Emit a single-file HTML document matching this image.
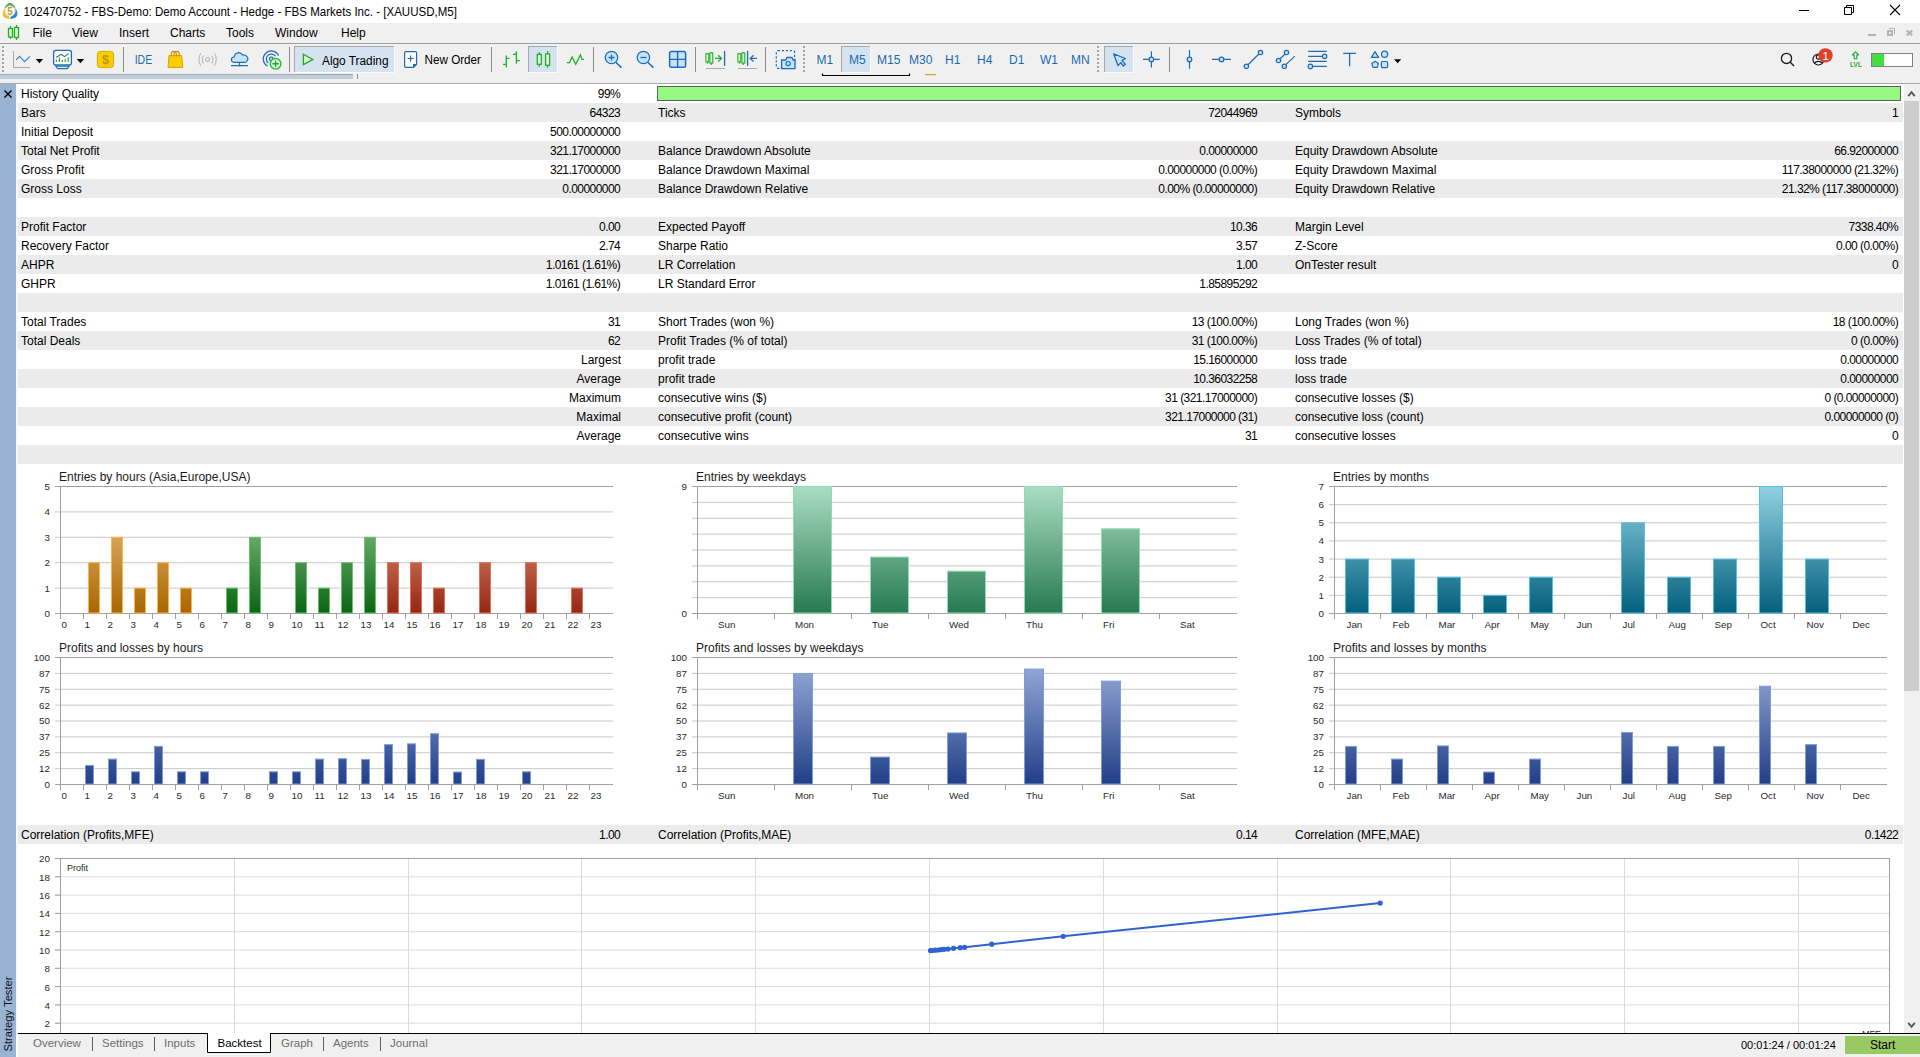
<!DOCTYPE html>
<html><head><meta charset="utf-8"><style>
html,body{margin:0;padding:0;background:#fff;overflow:hidden}
svg{display:block;font-family:"Liberation Sans", sans-serif}
</style></head><body>
<svg width="1920" height="1057" viewBox="0 0 1920 1057">
<rect x="0" y="0" width="1920" height="23" fill="#ffffff" /><rect x="0" y="23" width="1920" height="61" fill="#f0f0f0" /><rect x="0" y="43" width="1920" height="1" fill="#a0a0a0"/><rect x="0" y="83" width="1920" height="1" fill="#a9a9a9"/><text x="23.5" y="16" font-size="12.2" fill="#000" text-anchor="start" textLength="433.5" lengthAdjust="spacingAndGlyphs">102470752 - FBS-Demo: Demo Account - Hedge - FBS Markets Inc. - [XAUUSD,M5]</text><text x="32.5" y="37" font-size="12" fill="#000" text-anchor="start" >File</text><text x="72" y="37" font-size="12" fill="#000" text-anchor="start" >View</text><text x="119" y="37" font-size="12" fill="#000" text-anchor="start" >Insert</text><text x="170" y="37" font-size="12" fill="#000" text-anchor="start" >Charts</text><text x="226" y="37" font-size="12" fill="#000" text-anchor="start" >Tools</text><text x="275" y="37" font-size="12" fill="#000" text-anchor="start" >Window</text><text x="341" y="37" font-size="12" fill="#000" text-anchor="start" >Help</text><path d="M10 3 L4 8 L2.5 15 L6 18.5 L10 19 L14 18.5 L17.5 15 L16 8 Z" stroke="none" fill="#ffffff" stroke-width="1.2" /><path d="M10 2.8 C7 3.5 5 6 4.5 8.5 L10 8 L15.5 8.5 C15 6 13 3.5 10 2.8 Z" stroke="none" fill="#5aa84a" stroke-width="1.2" /><path d="M4.5 8.5 C2.5 11 2 14 3 16 C5 18.5 8 19.2 10 19 L8 14 Z" stroke="none" fill="#e8c820" stroke-width="1.2" /><path d="M15.5 8.5 C17.5 11 18 14 17 16 C15 18.5 12 19.2 10 19 L12 14 Z" stroke="none" fill="#2a8ad0" stroke-width="1.2" /><circle cx="10" cy="11" r="5.2" stroke="#d0d0d0" fill="#ffffff" stroke-width="0.8"/><text x="10" y="14.6" font-size="10" font-weight="bold" fill="#d09a2a" text-anchor="middle">5</text><rect x="1799" y="10" width="10" height="1" fill="#000"/><path d="M1844.5 7.5 H1851.5 V14.5 H1844.5 Z M1846.5 7.5 V5.5 H1853.5 V12.5 H1851.5" fill="none" stroke="#000" stroke-width="1"/><path d="M1890 5 L1900 15 M1900 5 L1890 15" stroke="#000" stroke-width="1.1"/><rect x="1868" y="34" width="8" height="2" fill="#b4b4b4" /><rect x="1887" y="30" width="6" height="6" fill="#b4b4b4" /><rect x="1889" y="32" width="2" height="2" fill="#f0f0f0" /><rect x="1889" y="28" width="6" height="1" fill="#b4b4b4" /><rect x="1894" y="28" width="1" height="6" fill="#b4b4b4" /><path d="M1906.8 30.6 L1912.2 35.4 M1912.2 30.6 L1906.8 35.4" stroke="#b4b4b4" stroke-width="2.1"/><path d="M10.5 26 V39 M16.5 25 V40" stroke="#1eb020" fill="none" stroke-width="1.2" /><rect x="8.5" y="28.5" width="4" height="8.5" fill="#e6fae6" stroke="#1eb020" stroke-width="1.3"/><rect x="14.5" y="27.5" width="4" height="10" fill="#e6fae6" stroke="#1eb020" stroke-width="1.3"/><rect x="2" y="46" width="2" height="2" fill="#a4a4a4" /><rect x="4" y="48" width="1" height="1" fill="#fafafa" /><rect x="2" y="50" width="2" height="2" fill="#a4a4a4" /><rect x="4" y="52" width="1" height="1" fill="#fafafa" /><rect x="2" y="54" width="2" height="2" fill="#a4a4a4" /><rect x="4" y="56" width="1" height="1" fill="#fafafa" /><rect x="2" y="58" width="2" height="2" fill="#a4a4a4" /><rect x="4" y="60" width="1" height="1" fill="#fafafa" /><rect x="2" y="62" width="2" height="2" fill="#a4a4a4" /><rect x="4" y="64" width="1" height="1" fill="#fafafa" /><rect x="2" y="66" width="2" height="2" fill="#a4a4a4" /><rect x="4" y="68" width="1" height="1" fill="#fafafa" /><rect x="2" y="70" width="2" height="2" fill="#a4a4a4" /><rect x="4" y="72" width="1" height="1" fill="#fafafa" /><rect x="803" y="46" width="2" height="2" fill="#a4a4a4" /><rect x="805" y="48" width="1" height="1" fill="#fafafa" /><rect x="803" y="50" width="2" height="2" fill="#a4a4a4" /><rect x="805" y="52" width="1" height="1" fill="#fafafa" /><rect x="803" y="54" width="2" height="2" fill="#a4a4a4" /><rect x="805" y="56" width="1" height="1" fill="#fafafa" /><rect x="803" y="58" width="2" height="2" fill="#a4a4a4" /><rect x="805" y="60" width="1" height="1" fill="#fafafa" /><rect x="803" y="62" width="2" height="2" fill="#a4a4a4" /><rect x="805" y="64" width="1" height="1" fill="#fafafa" /><rect x="803" y="66" width="2" height="2" fill="#a4a4a4" /><rect x="805" y="68" width="1" height="1" fill="#fafafa" /><rect x="803" y="70" width="2" height="2" fill="#a4a4a4" /><rect x="805" y="72" width="1" height="1" fill="#fafafa" /><rect x="1097" y="46" width="2" height="2" fill="#a4a4a4" /><rect x="1099" y="48" width="1" height="1" fill="#fafafa" /><rect x="1097" y="50" width="2" height="2" fill="#a4a4a4" /><rect x="1099" y="52" width="1" height="1" fill="#fafafa" /><rect x="1097" y="54" width="2" height="2" fill="#a4a4a4" /><rect x="1099" y="56" width="1" height="1" fill="#fafafa" /><rect x="1097" y="58" width="2" height="2" fill="#a4a4a4" /><rect x="1099" y="60" width="1" height="1" fill="#fafafa" /><rect x="1097" y="62" width="2" height="2" fill="#a4a4a4" /><rect x="1099" y="64" width="1" height="1" fill="#fafafa" /><rect x="1097" y="66" width="2" height="2" fill="#a4a4a4" /><rect x="1099" y="68" width="1" height="1" fill="#fafafa" /><rect x="1097" y="70" width="2" height="2" fill="#a4a4a4" /><rect x="1099" y="72" width="1" height="1" fill="#fafafa" /><path d="M13.5 51 V67.5 H30" stroke="#a8a8a8" fill="none" stroke-width="1" /><path d="M16.2 59.8 L19.6 56.3 L24.6 61.6 L29.9 56.3" stroke="#3d85c6" fill="none" stroke-width="1.2" /><path d="M35.8 59 H43.1 L39.45 63.2 Z" stroke="none" fill="#000" stroke-width="1.2" /><rect x="53.6" y="50.4" width="17.8" height="14.6" rx="2.2" fill="#fff" stroke="#1f6cb5" stroke-width="1.3"/><path d="M55 66.3 H70 M56.3 66.3 Q56.8 68.6 58.6 68.6 H66.4 Q68.2 68.6 68.7 66.3" stroke="#1f6cb5" fill="none" stroke-width="1.1" /><path d="M56.1 57.5 L61.1 54.4 L64.6 56.6 L68.6 53.4" stroke="#1f6cb5" fill="none" stroke-width="1.1" /><rect x="55.699999999999996" y="59.6" width="1.2" height="2.3999999999999986" fill="#1eb020" /><rect x="58.8" y="57.4" width="1.2" height="4.600000000000001" fill="#1eb020" /><rect x="61.699999999999996" y="60" width="1.2" height="2" fill="#1eb020" /><rect x="64.60000000000001" y="58.8" width="1.2" height="3.200000000000003" fill="#1eb020" /><rect x="67.60000000000001" y="57.2" width="1.2" height="4.799999999999997" fill="#1eb020" /><path d="M76.8 59 H84.1 L80.45 63.2 Z" stroke="none" fill="#000" stroke-width="1.2" /><rect x="97.4" y="51.4" width="16.2" height="16.2" rx="3" fill="#f8d000" stroke="#dca400" stroke-width="1"/><text x="105.5" y="64" font-size="13" font-weight="bold" fill="#c89212" text-anchor="middle">$</text><rect x="123" y="47" width="1" height="25" fill="#8c8c8c"/><text x="134.7" y="64" font-size="12.5" fill="#1f6cb5" textLength="17.5" lengthAdjust="spacingAndGlyphs">IDE</text><path d="M169 55.5 H181.7 L182.8 67.5 H168 Z" stroke="#e0a200" fill="#f8d000" stroke-width="1" /><path d="M171.3 56.5 V54 C171.3 50.5 176.3 50.5 176.3 54 V56.5 M174 56.5 V54 C174 50.5 179.3 50.5 179.3 54 V56.5" stroke="#d09000" fill="none" stroke-width="1.1" /><circle cx="207.6" cy="59.4" r="1.9" stroke="#b8b8b8" fill="none" stroke-width="1.2"/><path d="M203.5 55.5 C202 57.5 202 61.3 203.5 63.3 M211.7 55.5 C213.2 57.5 213.2 61.3 211.7 63.3 M200.8 53.2 C198.4 56.5 198.4 62.3 200.8 65.6 M214.4 53.2 C216.8 56.5 216.8 62.3 214.4 65.6" stroke="#b8b8b8" fill="none" stroke-width="1.1" /><path d="M234 62.3 C230.5 62.3 230.5 57 234.2 57 C234.5 52.5 240.5 51 242.5 55 C246.5 54.5 249 58 247.3 60.5 C247 62 246 62.3 245 62.3 Z" stroke="#1f6cb5" fill="#c5e3fb" stroke-width="1.2" /><path d="M239.5 62.5 V65.5 M231 65.6 H248" stroke="#1f6cb5" fill="none" stroke-width="1.2" /><circle cx="239.5" cy="65.6" r="1" stroke="none" fill="#1f6cb5" stroke-width="1.2"/><path d="M278.55 55.62 A8.0 8.0 0 1 0 267.54 66.06 M275.40 56.13 A5.0 5.0 0 1 0 268.22 62.94" stroke="#1f6cb5" fill="none" stroke-width="1.25" /><circle cx="271.3" cy="59" r="1.9" stroke="#1f6cb5" fill="#c5e3fb" stroke-width="1.2"/><circle cx="275.6" cy="63.8" r="5.3" stroke="#22bb33" fill="#e2fbe2" stroke-width="1.4"/><path d="M275.6 60.5 V67.1 M272.3 63.8 H278.9" stroke="#1aaa2a" fill="none" stroke-width="1.5" /><rect x="289" y="47" width="1" height="25" fill="#8c8c8c"/><rect x="294" y="46" width="100" height="26" fill="#d5e3f1" /><rect x="294" y="46" width="100" height="1" fill="#a8a8a8"/><rect x="294" y="46" width="1" height="26" fill="#a8a8a8"/><rect x="294" y="72" width="101" height="1" fill="#fafafa"/><rect x="394" y="46" width="1" height="27" fill="#fafafa"/><path d="M303.4 54.3 V64.6 L312.8 59.45 Z" stroke="#22aa22" fill="#d4f7d4" stroke-width="1.3" /><text x="322" y="65" font-size="12" fill="#000" text-anchor="start" textLength="66.5" lengthAdjust="spacingAndGlyphs">Algo Trading</text><path d="M405.8 51.6 H415.5 Q416.6 51.6 416.6 52.7 V64.5 L413.5 67.4 H405.8 Q404.6 67.4 404.6 66.2 V52.8 Q404.6 51.6 405.8 51.6 Z" stroke="#1f6cb5" fill="#fff" stroke-width="1.2" /><path d="M416.8 64 L413 67.8 V64 Z" stroke="none" fill="#1f6cb5" stroke-width="1.2" /><path d="M410.6 55.5 V61.5 M407.6 58.5 H413.6" stroke="#1f6cb5" fill="none" stroke-width="1.2" /><text x="424.5" y="64" font-size="12" fill="#000" text-anchor="start" textLength="56.5" lengthAdjust="spacingAndGlyphs">New Order</text><rect x="491" y="47" width="1" height="25" fill="#8c8c8c"/><path d="M506.3 55.4 V67.4 M503 64.3 H506.3 M506.3 58.3 H509.6 M516.4 51.2 V63.8 M513 54.4 H516.4 M516.4 60.6 H519.8" stroke="#1eb020" fill="none" stroke-width="1.3" /><rect x="528" y="46" width="29" height="26" fill="#d5e3f1" /><rect x="528" y="46" width="29" height="1" fill="#a8a8a8"/><rect x="528" y="46" width="1" height="26" fill="#a8a8a8"/><rect x="528" y="72" width="30" height="1" fill="#fafafa"/><rect x="557" y="46" width="1" height="27" fill="#fafafa"/><path d="M539.3 52 V66.7 M547.6 51 V67.7" stroke="#1eb020" fill="none" stroke-width="1.2" /><rect x="537.3" y="54.4" width="4" height="9.9" fill="#e6fae6" stroke="#1eb020" stroke-width="1.3"/><rect x="545.6" y="53.9" width="4" height="11.4" fill="#e6fae6" stroke="#1eb020" stroke-width="1.3"/><path d="M566.9 62.7 H569.5 L572.1 57 L575.7 64.3 L580.4 54.9 L582 59.4 H584" stroke="#1eb020" fill="none" stroke-width="1.3" /><rect x="593" y="47" width="1" height="25" fill="#8c8c8c"/><path d="M615.8 62.2 L621.5 67.6" stroke="#1f6cb5" fill="none" stroke-width="1.5" /><circle cx="611.5" cy="57.5" r="6.2" stroke="#1f6cb5" fill="#c5e3fb" stroke-width="1.3"/><path d="M608.5 57.5 H614.5 M611.5 54.5 V60.5" stroke="#1f6cb5" fill="none" stroke-width="1.3" /><path d="M647.6999999999999 62.2 L653.4 67.6" stroke="#1f6cb5" fill="none" stroke-width="1.5" /><circle cx="643.4" cy="57.5" r="6.2" stroke="#1f6cb5" fill="#c5e3fb" stroke-width="1.3"/><path d="M640.4 57.5 H646.4" stroke="#1f6cb5" fill="none" stroke-width="1.3" /><rect x="669.6" y="51.6" width="16" height="15.6" rx="2" fill="#c5e3fb" stroke="#1f6cb5" stroke-width="1.5"/><path d="M677.6 51.6 V67.2 M669.6 59.4 H685.6" stroke="#1f6cb5" fill="none" stroke-width="1.4" /><rect x="695" y="47" width="1" height="25" fill="#8c8c8c"/><path d="M707.4 53 V63.8 M711.3 51.9 V65" stroke="#1eb020" fill="none" stroke-width="1.1" /><rect x="705.9" y="53.9" width="2.9" height="8" fill="#e6fae6" stroke="#1eb020" stroke-width="1.1"/><rect x="709.9" y="52.9" width="2.9" height="10.2" fill="#e6fae6" stroke="#1eb020" stroke-width="1.1"/><path d="M715 58.4 H721.6 M718.2 55.2 L721.6 58.4 L718.2 61.6" stroke="#1eb020" fill="none" stroke-width="1.3" /><path d="M724.6 50.9 V65.9" stroke="#1f6cb5" fill="none" stroke-width="1.3" /><rect x="706" y="68" width="19" height="1" fill="#a8a8a8" /><path d="M739.4 53 V63.8 M743.3 51.9 V65" stroke="#1eb020" fill="none" stroke-width="1.1" /><rect x="737.9" y="53.9" width="2.9" height="8" fill="#e6fae6" stroke="#1eb020" stroke-width="1.1"/><rect x="741.9" y="52.9" width="2.9" height="10.2" fill="#e6fae6" stroke="#1eb020" stroke-width="1.1"/><path d="M747.6 50.9 V65.9" stroke="#1f6cb5" fill="none" stroke-width="1.3" /><path d="M757 58.4 H750.5 M753.6 55.2 L750.3 58.4 L753.6 61.6" stroke="#1f6cb5" fill="none" stroke-width="1.3" /><rect x="738" y="68" width="19" height="1" fill="#a8a8a8" /><rect x="765" y="47" width="1" height="25" fill="#8c8c8c"/><rect x="776.3" y="50.7" width="18.3" height="17.7" rx="1.5" fill="none" stroke="#1f6cb5" stroke-width="1.2" stroke-dasharray="2.2 1.8"/><path d="M782 60 H785.8 L787 57.5 H792 L793.2 60 H795 V68.6 H781.6 V60 Z" stroke="#1f6cb5" fill="#c5e3fb" stroke-width="1.3" /><circle cx="788.2" cy="63.6" r="2.1" stroke="#1f6cb5" fill="none" stroke-width="1.2"/><text x="816.4" y="64" font-size="12" fill="#1a6ab0" text-anchor="start" >M1</text><rect x="841" y="46" width="29" height="26" fill="#d5e3f1" /><rect x="841" y="46" width="29" height="1" fill="#a8a8a8"/><rect x="841" y="46" width="1" height="26" fill="#a8a8a8"/><rect x="841" y="72" width="30" height="1" fill="#fafafa"/><rect x="870" y="46" width="1" height="27" fill="#fafafa"/><text x="849" y="64" font-size="12" fill="#1a6ab0" text-anchor="start" >M5</text><text x="877" y="64" font-size="12" fill="#1a6ab0" text-anchor="start" >M15</text><text x="909" y="64" font-size="12" fill="#1a6ab0" text-anchor="start" >M30</text><text x="945" y="64" font-size="12" fill="#1a6ab0" text-anchor="start" >H1</text><text x="977" y="64" font-size="12" fill="#1a6ab0" text-anchor="start" >H4</text><text x="1009" y="64" font-size="12" fill="#1a6ab0" text-anchor="start" >D1</text><text x="1040" y="64" font-size="12" fill="#1a6ab0" text-anchor="start" >W1</text><text x="1071" y="64" font-size="12" fill="#1a6ab0" text-anchor="start" >MN</text><path d="M822.5 73.5 V75.5 H909.5 V73.5" fill="none" stroke="#000" stroke-width="1.2"/><rect x="925" y="74" width="11" height="1.2" fill="#d8a030" /><rect x="1104" y="46" width="29" height="26" fill="#d5e3f1" /><rect x="1104" y="46" width="29" height="1" fill="#a8a8a8"/><rect x="1104" y="46" width="1" height="26" fill="#a8a8a8"/><rect x="1104" y="72" width="30" height="1" fill="#fafafa"/><rect x="1133" y="46" width="1" height="27" fill="#fafafa"/><path d="M1113.6 53.8 L1125.4 58.5 L1122 60.6 L1125.4 64.2 L1123.3 66 L1120.8 62.6 L1118 65.6 Z" stroke="#1f6cb5" fill="#c5e3fb" stroke-width="1.3" stroke-linejoin="round"/><path d="M1143 59.4 H1149 M1153.8 59.4 H1159.8 M1151.4 51.2 V57 M1151.4 61.8 V67.6" stroke="#1f6cb5" fill="none" stroke-width="1.2" /><circle cx="1151.4" cy="59.4" r="2.3" stroke="#1f6cb5" fill="#c5e3fb" stroke-width="1.2"/><rect x="1169" y="47" width="1" height="25" fill="#8c8c8c"/><path d="M1189.5 50.1 V57 M1189.5 61.8 V68.7" stroke="#1f6cb5" fill="none" stroke-width="1.2" /><circle cx="1189.5" cy="59.4" r="2.3" stroke="#1f6cb5" fill="#c5e3fb" stroke-width="1.2"/><path d="M1212 59.4 H1219.2 M1223.8 59.4 H1230.9" stroke="#1f6cb5" fill="none" stroke-width="1.2" /><circle cx="1221.5" cy="59.4" r="2.3" stroke="#1f6cb5" fill="#c5e3fb" stroke-width="1.2"/><path d="M1248 64.7 L1258.9 54" stroke="#1f6cb5" fill="none" stroke-width="1.2" /><circle cx="1246.4" cy="66.3" r="2.2" stroke="#1f6cb5" fill="#c5e3fb" stroke-width="1.2"/><circle cx="1260.5" cy="52.5" r="2.2" stroke="#1f6cb5" fill="#c5e3fb" stroke-width="1.2"/><path d="M1280 58.8 L1285 54.2 M1285.8 64.6 L1294.9 56.1" stroke="#1f6cb5" fill="none" stroke-width="1.2" /><circle cx="1278.5" cy="60.5" r="2.2" stroke="#1f6cb5" fill="#c5e3fb" stroke-width="1.2"/><circle cx="1286.5" cy="52.5" r="2.2" stroke="#1f6cb5" fill="#c5e3fb" stroke-width="1.2"/><circle cx="1284.3" cy="66.3" r="2.2" stroke="#1f6cb5" fill="#c5e3fb" stroke-width="1.2"/><path d="M1308.2 51.4 H1326.8 M1308.2 56.3 H1322.4 M1308.2 61.4 H1326.8 M1312.6 66.4 H1326.8" stroke="#1f6cb5" fill="none" stroke-width="1.2" /><circle cx="1324.6" cy="56.3" r="2.2" stroke="#1f6cb5" fill="#c5e3fb" stroke-width="1.2"/><circle cx="1310.4" cy="66.4" r="2.2" stroke="#1f6cb5" fill="#c5e3fb" stroke-width="1.2"/><path d="M1343.2 53.4 H1356 M1349.6 53.4 V66.2" stroke="#1f6cb5" fill="none" stroke-width="1.3" /><path d="M1375 51.6 L1378.6 57.4 H1371.4 Z" stroke="#1f6cb5" fill="#c5e3fb" stroke-width="1.2" stroke-linejoin="round"/><circle cx="1384.6" cy="54.3" r="3.1" stroke="#1f6cb5" fill="#c5e3fb" stroke-width="1.2"/><path d="M1375.1 61.3 L1378.4 63.6 L1377.2 67.4 H1373 L1371.8 63.6 Z" stroke="#1f6cb5" fill="#c5e3fb" stroke-width="1.2" stroke-linejoin="round"/><rect x="1381.4" y="61.5" width="6.2" height="6.1" rx="1" fill="#c5e3fb" stroke="#1f6cb5" stroke-width="1.2"/><path d="M1394.1 59.2 H1401.2 L1397.65 63.2 Z" stroke="none" fill="#000" stroke-width="1.2" /><circle cx="1786.5" cy="58.4" r="5.1" stroke="#1a1a1a" fill="none" stroke-width="1.3"/><path d="M1790.3 62.3 L1794 66" stroke="#1a1a1a" fill="none" stroke-width="1.4" /><circle cx="1818.4" cy="59.5" r="5.5" stroke="#1a1a1a" fill="none" stroke-width="1.2"/><circle cx="1818.4" cy="57" r="2.1" stroke="#1a1a1a" fill="none" stroke-width="1.1"/><path d="M1814.3 63.2 C1815.8 60.8 1821 60.8 1822.5 63.2" stroke="#1a1a1a" fill="none" stroke-width="1.1" /><circle cx="1825.5" cy="55.4" r="7.2" stroke="none" fill="#e0402a" stroke-width="1.2"/><text x="1825.6" y="59.6" font-size="11.5" fill="#fff" text-anchor="middle">1</text><path d="M1855.5 51.8 L1858.6 55 H1856.8 V58.8 H1854.2 V55 H1852.4 Z" stroke="#1aaa2a" fill="#fff" stroke-width="1.1" stroke-linejoin="round"/><text x="1856" y="66.6" font-size="7" font-weight="bold" fill="#1aaa2a" text-anchor="middle" textLength="12" lengthAdjust="spacingAndGlyphs">LVL</text><rect x="1871.5" y="53.5" width="41" height="13" fill="#fff" stroke="#808080" stroke-width="1"/><rect x="1872" y="54" width="12" height="12" fill="#44dd44" /><rect x="0" y="74" width="353" height="1" fill="#a8a8a8" /><rect x="0" y="75" width="353" height="4" fill="#bfcedb" /><rect x="357" y="74" width="1" height="5" fill="#909090"/><rect x="0" y="84" width="16" height="973" fill="#98b3d3" /><rect x="16" y="84" width="2" height="949" fill="#f7f7f7" /><rect x="18" y="84" width="1886" height="949" fill="#ffffff" /><path d="M4.5 90.6 L11.5 97.6 M11.5 90.6 L4.5 97.6" stroke="#000" stroke-width="1.4"/><text transform="translate(12,1051.5) rotate(-90)" font-size="11.5" fill="#111" textLength="75" lengthAdjust="spacingAndGlyphs">Strategy Tester</text><text x="21" y="98" font-size="12" fill="#000" text-anchor="start" >History Quality</text><text x="620.2" y="98" font-size="12" fill="#000" text-anchor="end" letter-spacing="-0.55">99%</text><rect x="18" y="103" width="1885" height="19" fill="#ebebeb" /><text x="21" y="117" font-size="12" fill="#000" text-anchor="start" >Bars</text><text x="620.2" y="117" font-size="12" fill="#000" text-anchor="end" letter-spacing="-0.55">64323</text><text x="658" y="117" font-size="12" fill="#000" text-anchor="start" >Ticks</text><text x="1257.2" y="117" font-size="12" fill="#000" text-anchor="end" letter-spacing="-0.55">72044969</text><text x="1295" y="117" font-size="12" fill="#000" text-anchor="start" >Symbols</text><text x="1898.2" y="117" font-size="12" fill="#000" text-anchor="end" letter-spacing="-0.55">1</text><text x="21" y="136" font-size="12" fill="#000" text-anchor="start" >Initial Deposit</text><text x="620.2" y="136" font-size="12" fill="#000" text-anchor="end" letter-spacing="-0.55">500.00000000</text><rect x="18" y="141" width="1885" height="19" fill="#ebebeb" /><text x="21" y="155" font-size="12" fill="#000" text-anchor="start" >Total Net Profit</text><text x="620.2" y="155" font-size="12" fill="#000" text-anchor="end" letter-spacing="-0.55">321.17000000</text><text x="658" y="155" font-size="12" fill="#000" text-anchor="start" >Balance Drawdown Absolute</text><text x="1257.2" y="155" font-size="12" fill="#000" text-anchor="end" letter-spacing="-0.55">0.00000000</text><text x="1295" y="155" font-size="12" fill="#000" text-anchor="start" >Equity Drawdown Absolute</text><text x="1898.2" y="155" font-size="12" fill="#000" text-anchor="end" letter-spacing="-0.55">66.92000000</text><text x="21" y="174" font-size="12" fill="#000" text-anchor="start" >Gross Profit</text><text x="620.2" y="174" font-size="12" fill="#000" text-anchor="end" letter-spacing="-0.55">321.17000000</text><text x="658" y="174" font-size="12" fill="#000" text-anchor="start" >Balance Drawdown Maximal</text><text x="1257.2" y="174" font-size="12" fill="#000" text-anchor="end" letter-spacing="-0.55">0.00000000 (0.00%)</text><text x="1295" y="174" font-size="12" fill="#000" text-anchor="start" >Equity Drawdown Maximal</text><text x="1898.2" y="174" font-size="12" fill="#000" text-anchor="end" letter-spacing="-0.55">117.38000000 (21.32%)</text><rect x="18" y="179" width="1885" height="19" fill="#ebebeb" /><text x="21" y="193" font-size="12" fill="#000" text-anchor="start" >Gross Loss</text><text x="620.2" y="193" font-size="12" fill="#000" text-anchor="end" letter-spacing="-0.55">0.00000000</text><text x="658" y="193" font-size="12" fill="#000" text-anchor="start" >Balance Drawdown Relative</text><text x="1257.2" y="193" font-size="12" fill="#000" text-anchor="end" letter-spacing="-0.55">0.00% (0.00000000)</text><text x="1295" y="193" font-size="12" fill="#000" text-anchor="start" >Equity Drawdown Relative</text><text x="1898.2" y="193" font-size="12" fill="#000" text-anchor="end" letter-spacing="-0.55">21.32% (117.38000000)</text><rect x="18" y="217" width="1885" height="19" fill="#ebebeb" /><text x="21" y="231" font-size="12" fill="#000" text-anchor="start" >Profit Factor</text><text x="620.2" y="231" font-size="12" fill="#000" text-anchor="end" letter-spacing="-0.55">0.00</text><text x="658" y="231" font-size="12" fill="#000" text-anchor="start" >Expected Payoff</text><text x="1257.2" y="231" font-size="12" fill="#000" text-anchor="end" letter-spacing="-0.55">10.36</text><text x="1295" y="231" font-size="12" fill="#000" text-anchor="start" >Margin Level</text><text x="1898.2" y="231" font-size="12" fill="#000" text-anchor="end" letter-spacing="-0.55">7338.40%</text><text x="21" y="250" font-size="12" fill="#000" text-anchor="start" >Recovery Factor</text><text x="620.2" y="250" font-size="12" fill="#000" text-anchor="end" letter-spacing="-0.55">2.74</text><text x="658" y="250" font-size="12" fill="#000" text-anchor="start" >Sharpe Ratio</text><text x="1257.2" y="250" font-size="12" fill="#000" text-anchor="end" letter-spacing="-0.55">3.57</text><text x="1295" y="250" font-size="12" fill="#000" text-anchor="start" >Z-Score</text><text x="1898.2" y="250" font-size="12" fill="#000" text-anchor="end" letter-spacing="-0.55">0.00 (0.00%)</text><rect x="18" y="255" width="1885" height="19" fill="#ebebeb" /><text x="21" y="269" font-size="12" fill="#000" text-anchor="start" >AHPR</text><text x="620.2" y="269" font-size="12" fill="#000" text-anchor="end" letter-spacing="-0.55">1.0161 (1.61%)</text><text x="658" y="269" font-size="12" fill="#000" text-anchor="start" >LR Correlation</text><text x="1257.2" y="269" font-size="12" fill="#000" text-anchor="end" letter-spacing="-0.55">1.00</text><text x="1295" y="269" font-size="12" fill="#000" text-anchor="start" >OnTester result</text><text x="1898.2" y="269" font-size="12" fill="#000" text-anchor="end" letter-spacing="-0.55">0</text><text x="21" y="288" font-size="12" fill="#000" text-anchor="start" >GHPR</text><text x="620.2" y="288" font-size="12" fill="#000" text-anchor="end" letter-spacing="-0.55">1.0161 (1.61%)</text><text x="658" y="288" font-size="12" fill="#000" text-anchor="start" >LR Standard Error</text><text x="1257.2" y="288" font-size="12" fill="#000" text-anchor="end" letter-spacing="-0.55">1.85895292</text><rect x="18" y="293" width="1885" height="19" fill="#ebebeb" /><text x="21" y="326" font-size="12" fill="#000" text-anchor="start" >Total Trades</text><text x="620.2" y="326" font-size="12" fill="#000" text-anchor="end" letter-spacing="-0.55">31</text><text x="658" y="326" font-size="12" fill="#000" text-anchor="start" >Short Trades (won %)</text><text x="1257.2" y="326" font-size="12" fill="#000" text-anchor="end" letter-spacing="-0.55">13 (100.00%)</text><text x="1295" y="326" font-size="12" fill="#000" text-anchor="start" >Long Trades (won %)</text><text x="1898.2" y="326" font-size="12" fill="#000" text-anchor="end" letter-spacing="-0.55">18 (100.00%)</text><rect x="18" y="331" width="1885" height="19" fill="#ebebeb" /><text x="21" y="345" font-size="12" fill="#000" text-anchor="start" >Total Deals</text><text x="620.2" y="345" font-size="12" fill="#000" text-anchor="end" letter-spacing="-0.55">62</text><text x="658" y="345" font-size="12" fill="#000" text-anchor="start" >Profit Trades (% of total)</text><text x="1257.2" y="345" font-size="12" fill="#000" text-anchor="end" letter-spacing="-0.55">31 (100.00%)</text><text x="1295" y="345" font-size="12" fill="#000" text-anchor="start" >Loss Trades (% of total)</text><text x="1898.2" y="345" font-size="12" fill="#000" text-anchor="end" letter-spacing="-0.55">0 (0.00%)</text><text x="621" y="364" font-size="12" fill="#000" text-anchor="end" >Largest</text><text x="658" y="364" font-size="12" fill="#000" text-anchor="start" >profit trade</text><text x="1257.2" y="364" font-size="12" fill="#000" text-anchor="end" letter-spacing="-0.55">15.16000000</text><text x="1295" y="364" font-size="12" fill="#000" text-anchor="start" >loss trade</text><text x="1898.2" y="364" font-size="12" fill="#000" text-anchor="end" letter-spacing="-0.55">0.00000000</text><rect x="18" y="369" width="1885" height="19" fill="#ebebeb" /><text x="621" y="383" font-size="12" fill="#000" text-anchor="end" >Average</text><text x="658" y="383" font-size="12" fill="#000" text-anchor="start" >profit trade</text><text x="1257.2" y="383" font-size="12" fill="#000" text-anchor="end" letter-spacing="-0.55">10.36032258</text><text x="1295" y="383" font-size="12" fill="#000" text-anchor="start" >loss trade</text><text x="1898.2" y="383" font-size="12" fill="#000" text-anchor="end" letter-spacing="-0.55">0.00000000</text><text x="621" y="402" font-size="12" fill="#000" text-anchor="end" >Maximum</text><text x="658" y="402" font-size="12" fill="#000" text-anchor="start" >consecutive wins ($)</text><text x="1257.2" y="402" font-size="12" fill="#000" text-anchor="end" letter-spacing="-0.55">31 (321.17000000)</text><text x="1295" y="402" font-size="12" fill="#000" text-anchor="start" >consecutive losses ($)</text><text x="1898.2" y="402" font-size="12" fill="#000" text-anchor="end" letter-spacing="-0.55">0 (0.00000000)</text><rect x="18" y="407" width="1885" height="19" fill="#ebebeb" /><text x="621" y="421" font-size="12" fill="#000" text-anchor="end" >Maximal</text><text x="658" y="421" font-size="12" fill="#000" text-anchor="start" >consecutive profit (count)</text><text x="1257.2" y="421" font-size="12" fill="#000" text-anchor="end" letter-spacing="-0.55">321.17000000 (31)</text><text x="1295" y="421" font-size="12" fill="#000" text-anchor="start" >consecutive loss (count)</text><text x="1898.2" y="421" font-size="12" fill="#000" text-anchor="end" letter-spacing="-0.55">0.00000000 (0)</text><text x="621" y="440" font-size="12" fill="#000" text-anchor="end" >Average</text><text x="658" y="440" font-size="12" fill="#000" text-anchor="start" >consecutive wins</text><text x="1257.2" y="440" font-size="12" fill="#000" text-anchor="end" letter-spacing="-0.55">31</text><text x="1295" y="440" font-size="12" fill="#000" text-anchor="start" >consecutive losses</text><text x="1898.2" y="440" font-size="12" fill="#000" text-anchor="end" letter-spacing="-0.55">0</text><rect x="18" y="445" width="1885" height="19" fill="#ebebeb" /><rect x="657.5" y="86.5" width="1243" height="14" fill="#98f982" stroke="#606060" stroke-width="1"/><rect x="18" y="825" width="1885" height="19" fill="#ebebeb" /><text x="21" y="839" font-size="12" fill="#000" text-anchor="start" >Correlation (Profits,MFE)</text><text x="620.2" y="839" font-size="12" fill="#000" text-anchor="end" letter-spacing="-0.55">1.00</text><text x="658" y="839" font-size="12" fill="#000" text-anchor="start" >Correlation (Profits,MAE)</text><text x="1257.2" y="839" font-size="12" fill="#000" text-anchor="end" letter-spacing="-0.55">0.14</text><text x="1295" y="839" font-size="12" fill="#000" text-anchor="start" >Correlation (MFE,MAE)</text><text x="1898.2" y="839" font-size="12" fill="#000" text-anchor="end" letter-spacing="-0.55">0.1422</text><text x="59" y="481" font-size="12" fill="#1a1a1a" text-anchor="start" >Entries by hours (Asia,Europe,USA)</text><rect x="55" y="613.00" width="558" height="1" fill="#a0a0a0" shape-rendering="geometricPrecision"/><rect x="55" y="587.60" width="558" height="1" fill="#c8c8c8" shape-rendering="geometricPrecision"/><rect x="55" y="562.20" width="558" height="1" fill="#c8c8c8" shape-rendering="geometricPrecision"/><rect x="55" y="536.80" width="558" height="1" fill="#c8c8c8" shape-rendering="geometricPrecision"/><rect x="55" y="511.40" width="558" height="1" fill="#c8c8c8" shape-rendering="geometricPrecision"/><rect x="55" y="486.00" width="558" height="1" fill="#a0a0a0" shape-rendering="geometricPrecision"/><text x="50" y="616.6" font-size="9.8" fill="#2a2a2a" text-anchor="end" >0</text><text x="50" y="591.6" font-size="9.8" fill="#2a2a2a" text-anchor="end" >1</text><text x="50" y="565.6" font-size="9.8" fill="#2a2a2a" text-anchor="end" >2</text><text x="50" y="540.6" font-size="9.8" fill="#2a2a2a" text-anchor="end" >3</text><text x="50" y="514.6" font-size="9.8" fill="#2a2a2a" text-anchor="end" >4</text><text x="50" y="489.6" font-size="9.8" fill="#2a2a2a" text-anchor="end" >5</text><rect x="60" y="486" width="1" height="132" fill="#a0a0a0"/><rect x="60" y="613" width="1" height="6" fill="#a0a0a0"/><text x="61.5" y="628" font-size="9.8" fill="#2a2a2a" text-anchor="start" >0</text><rect x="83" y="613" width="1" height="6" fill="#a0a0a0"/><text x="84.5" y="628" font-size="9.8" fill="#2a2a2a" text-anchor="start" >1</text><rect x="106" y="613" width="1" height="6" fill="#a0a0a0"/><text x="107.5" y="628" font-size="9.8" fill="#2a2a2a" text-anchor="start" >2</text><rect x="129" y="613" width="1" height="6" fill="#a0a0a0"/><text x="130.5" y="628" font-size="9.8" fill="#2a2a2a" text-anchor="start" >3</text><rect x="152" y="613" width="1" height="6" fill="#a0a0a0"/><text x="153.5" y="628" font-size="9.8" fill="#2a2a2a" text-anchor="start" >4</text><rect x="175" y="613" width="1" height="6" fill="#a0a0a0"/><text x="176.5" y="628" font-size="9.8" fill="#2a2a2a" text-anchor="start" >5</text><rect x="198" y="613" width="1" height="6" fill="#a0a0a0"/><text x="199.5" y="628" font-size="9.8" fill="#2a2a2a" text-anchor="start" >6</text><rect x="221" y="613" width="1" height="6" fill="#a0a0a0"/><text x="222.5" y="628" font-size="9.8" fill="#2a2a2a" text-anchor="start" >7</text><rect x="244" y="613" width="1" height="6" fill="#a0a0a0"/><text x="245.5" y="628" font-size="9.8" fill="#2a2a2a" text-anchor="start" >8</text><rect x="267" y="613" width="1" height="6" fill="#a0a0a0"/><text x="268.5" y="628" font-size="9.8" fill="#2a2a2a" text-anchor="start" >9</text><rect x="290" y="613" width="1" height="6" fill="#a0a0a0"/><text x="291.5" y="628" font-size="9.8" fill="#2a2a2a" text-anchor="start" >10</text><rect x="313" y="613" width="1" height="6" fill="#a0a0a0"/><text x="314.5" y="628" font-size="9.8" fill="#2a2a2a" text-anchor="start" >11</text><rect x="336" y="613" width="1" height="6" fill="#a0a0a0"/><text x="337.5" y="628" font-size="9.8" fill="#2a2a2a" text-anchor="start" >12</text><rect x="359" y="613" width="1" height="6" fill="#a0a0a0"/><text x="360.5" y="628" font-size="9.8" fill="#2a2a2a" text-anchor="start" >13</text><rect x="382" y="613" width="1" height="6" fill="#a0a0a0"/><text x="383.5" y="628" font-size="9.8" fill="#2a2a2a" text-anchor="start" >14</text><rect x="405" y="613" width="1" height="6" fill="#a0a0a0"/><text x="406.5" y="628" font-size="9.8" fill="#2a2a2a" text-anchor="start" >15</text><rect x="428" y="613" width="1" height="6" fill="#a0a0a0"/><text x="429.5" y="628" font-size="9.8" fill="#2a2a2a" text-anchor="start" >16</text><rect x="451" y="613" width="1" height="6" fill="#a0a0a0"/><text x="452.5" y="628" font-size="9.8" fill="#2a2a2a" text-anchor="start" >17</text><rect x="474" y="613" width="1" height="6" fill="#a0a0a0"/><text x="475.5" y="628" font-size="9.8" fill="#2a2a2a" text-anchor="start" >18</text><rect x="497" y="613" width="1" height="6" fill="#a0a0a0"/><text x="498.5" y="628" font-size="9.8" fill="#2a2a2a" text-anchor="start" >19</text><rect x="520" y="613" width="1" height="6" fill="#a0a0a0"/><text x="521.5" y="628" font-size="9.8" fill="#2a2a2a" text-anchor="start" >20</text><rect x="543" y="613" width="1" height="6" fill="#a0a0a0"/><text x="544.5" y="628" font-size="9.8" fill="#2a2a2a" text-anchor="start" >21</text><rect x="566" y="613" width="1" height="6" fill="#a0a0a0"/><text x="567.5" y="628" font-size="9.8" fill="#2a2a2a" text-anchor="start" >22</text><rect x="589" y="613" width="1" height="6" fill="#a0a0a0"/><text x="590.5" y="628" font-size="9.8" fill="#2a2a2a" text-anchor="start" >23</text><defs><linearGradient id="g1" gradientUnits="userSpaceOnUse" x1="0" y1="486" x2="0" y2="613"><stop offset="0" stop-color="#f6cd8f"/><stop offset="1" stop-color="#a86600"/></linearGradient></defs><rect x="88.5" y="562.70" width="11" height="50.30" fill="url(#g1)" stroke="#ffb44a" stroke-width="1"/><defs><linearGradient id="g2" gradientUnits="userSpaceOnUse" x1="0" y1="486" x2="0" y2="613"><stop offset="0" stop-color="#f6cd8f"/><stop offset="1" stop-color="#a86600"/></linearGradient></defs><rect x="111.5" y="537.30" width="11" height="75.70" fill="url(#g2)" stroke="#ffb44a" stroke-width="1"/><defs><linearGradient id="g3" gradientUnits="userSpaceOnUse" x1="0" y1="486" x2="0" y2="613"><stop offset="0" stop-color="#f6cd8f"/><stop offset="1" stop-color="#a86600"/></linearGradient></defs><rect x="134.5" y="588.10" width="11" height="24.90" fill="url(#g3)" stroke="#ffb44a" stroke-width="1"/><defs><linearGradient id="g4" gradientUnits="userSpaceOnUse" x1="0" y1="486" x2="0" y2="613"><stop offset="0" stop-color="#f6cd8f"/><stop offset="1" stop-color="#a86600"/></linearGradient></defs><rect x="157.5" y="562.70" width="11" height="50.30" fill="url(#g4)" stroke="#ffb44a" stroke-width="1"/><defs><linearGradient id="g5" gradientUnits="userSpaceOnUse" x1="0" y1="486" x2="0" y2="613"><stop offset="0" stop-color="#f6cd8f"/><stop offset="1" stop-color="#a86600"/></linearGradient></defs><rect x="180.5" y="588.10" width="11" height="24.90" fill="url(#g5)" stroke="#ffb44a" stroke-width="1"/><defs><linearGradient id="g6" gradientUnits="userSpaceOnUse" x1="0" y1="486" x2="0" y2="613"><stop offset="0" stop-color="#a0d4a1"/><stop offset="1" stop-color="#0a6612"/></linearGradient></defs><rect x="226.5" y="588.10" width="11" height="24.90" fill="url(#g6)" stroke="#6cc070" stroke-width="1"/><defs><linearGradient id="g7" gradientUnits="userSpaceOnUse" x1="0" y1="486" x2="0" y2="613"><stop offset="0" stop-color="#a0d4a1"/><stop offset="1" stop-color="#0a6612"/></linearGradient></defs><rect x="249.5" y="537.30" width="11" height="75.70" fill="url(#g7)" stroke="#6cc070" stroke-width="1"/><defs><linearGradient id="g8" gradientUnits="userSpaceOnUse" x1="0" y1="486" x2="0" y2="613"><stop offset="0" stop-color="#a0d4a1"/><stop offset="1" stop-color="#0a6612"/></linearGradient></defs><rect x="295.5" y="562.70" width="11" height="50.30" fill="url(#g8)" stroke="#6cc070" stroke-width="1"/><defs><linearGradient id="g9" gradientUnits="userSpaceOnUse" x1="0" y1="486" x2="0" y2="613"><stop offset="0" stop-color="#a0d4a1"/><stop offset="1" stop-color="#0a6612"/></linearGradient></defs><rect x="318.5" y="588.10" width="11" height="24.90" fill="url(#g9)" stroke="#6cc070" stroke-width="1"/><defs><linearGradient id="g10" gradientUnits="userSpaceOnUse" x1="0" y1="486" x2="0" y2="613"><stop offset="0" stop-color="#a0d4a1"/><stop offset="1" stop-color="#0a6612"/></linearGradient></defs><rect x="341.5" y="562.70" width="11" height="50.30" fill="url(#g10)" stroke="#6cc070" stroke-width="1"/><defs><linearGradient id="g11" gradientUnits="userSpaceOnUse" x1="0" y1="486" x2="0" y2="613"><stop offset="0" stop-color="#a0d4a1"/><stop offset="1" stop-color="#0a6612"/></linearGradient></defs><rect x="364.5" y="537.30" width="11" height="75.70" fill="url(#g11)" stroke="#6cc070" stroke-width="1"/><defs><linearGradient id="g12" gradientUnits="userSpaceOnUse" x1="0" y1="486" x2="0" y2="613"><stop offset="0" stop-color="#feb19c"/><stop offset="1" stop-color="#952810"/></linearGradient></defs><rect x="387.5" y="562.70" width="11" height="50.30" fill="url(#g12)" stroke="#e8705a" stroke-width="1"/><defs><linearGradient id="g13" gradientUnits="userSpaceOnUse" x1="0" y1="486" x2="0" y2="613"><stop offset="0" stop-color="#feb19c"/><stop offset="1" stop-color="#952810"/></linearGradient></defs><rect x="410.5" y="562.70" width="11" height="50.30" fill="url(#g13)" stroke="#e8705a" stroke-width="1"/><defs><linearGradient id="g14" gradientUnits="userSpaceOnUse" x1="0" y1="486" x2="0" y2="613"><stop offset="0" stop-color="#feb19c"/><stop offset="1" stop-color="#952810"/></linearGradient></defs><rect x="433.5" y="588.10" width="11" height="24.90" fill="url(#g14)" stroke="#e8705a" stroke-width="1"/><defs><linearGradient id="g15" gradientUnits="userSpaceOnUse" x1="0" y1="486" x2="0" y2="613"><stop offset="0" stop-color="#feb19c"/><stop offset="1" stop-color="#952810"/></linearGradient></defs><rect x="479.5" y="562.70" width="11" height="50.30" fill="url(#g15)" stroke="#e8705a" stroke-width="1"/><defs><linearGradient id="g16" gradientUnits="userSpaceOnUse" x1="0" y1="486" x2="0" y2="613"><stop offset="0" stop-color="#feb19c"/><stop offset="1" stop-color="#952810"/></linearGradient></defs><rect x="525.5" y="562.70" width="11" height="50.30" fill="url(#g16)" stroke="#e8705a" stroke-width="1"/><defs><linearGradient id="g17" gradientUnits="userSpaceOnUse" x1="0" y1="486" x2="0" y2="613"><stop offset="0" stop-color="#feb19c"/><stop offset="1" stop-color="#952810"/></linearGradient></defs><rect x="571.5" y="588.10" width="11" height="24.90" fill="url(#g17)" stroke="#e8705a" stroke-width="1"/><text x="696" y="481" font-size="12" fill="#1a1a1a" text-anchor="start" >Entries by weekdays</text><rect x="692" y="613.00" width="545" height="1" fill="#a0a0a0" shape-rendering="geometricPrecision"/><rect x="692" y="597.12" width="545" height="1" fill="#c8c8c8" shape-rendering="geometricPrecision"/><rect x="692" y="581.25" width="545" height="1" fill="#c8c8c8" shape-rendering="geometricPrecision"/><rect x="692" y="565.38" width="545" height="1" fill="#c8c8c8" shape-rendering="geometricPrecision"/><rect x="692" y="549.50" width="545" height="1" fill="#c8c8c8" shape-rendering="geometricPrecision"/><rect x="692" y="533.62" width="545" height="1" fill="#c8c8c8" shape-rendering="geometricPrecision"/><rect x="692" y="517.75" width="545" height="1" fill="#c8c8c8" shape-rendering="geometricPrecision"/><rect x="692" y="501.88" width="545" height="1" fill="#c8c8c8" shape-rendering="geometricPrecision"/><rect x="692" y="486.00" width="545" height="1" fill="#a0a0a0" shape-rendering="geometricPrecision"/><text x="687" y="616.6" font-size="9.8" fill="#2a2a2a" text-anchor="end" >0</text><text x="687" y="489.6" font-size="9.8" fill="#2a2a2a" text-anchor="end" >9</text><rect x="697" y="486" width="1" height="132" fill="#a0a0a0"/><rect x="697" y="613" width="1" height="6" fill="#a0a0a0"/><text x="718" y="628" font-size="9.8" fill="#2a2a2a" text-anchor="start" >Sun</text><rect x="774" y="613" width="1" height="6" fill="#a0a0a0"/><text x="795" y="628" font-size="9.8" fill="#2a2a2a" text-anchor="start" >Mon</text><rect x="851" y="613" width="1" height="6" fill="#a0a0a0"/><text x="872" y="628" font-size="9.8" fill="#2a2a2a" text-anchor="start" >Tue</text><rect x="928" y="613" width="1" height="6" fill="#a0a0a0"/><text x="949" y="628" font-size="9.8" fill="#2a2a2a" text-anchor="start" >Wed</text><rect x="1005" y="613" width="1" height="6" fill="#a0a0a0"/><text x="1026" y="628" font-size="9.8" fill="#2a2a2a" text-anchor="start" >Thu</text><rect x="1082" y="613" width="1" height="6" fill="#a0a0a0"/><text x="1103" y="628" font-size="9.8" fill="#2a2a2a" text-anchor="start" >Fri</text><rect x="1159" y="613" width="1" height="6" fill="#a0a0a0"/><text x="1180" y="628" font-size="9.8" fill="#2a2a2a" text-anchor="start" >Sat</text><defs><linearGradient id="g18" gradientUnits="userSpaceOnUse" x1="0" y1="486" x2="0" y2="613"><stop offset="0" stop-color="#abdec2"/><stop offset="1" stop-color="#267a52"/></linearGradient></defs><rect x="793.5" y="486.50" width="38" height="126.50" fill="url(#g18)" stroke="#90dcb4" stroke-width="1"/><defs><linearGradient id="g19" gradientUnits="userSpaceOnUse" x1="0" y1="486" x2="0" y2="613"><stop offset="0" stop-color="#abdec2"/><stop offset="1" stop-color="#267a52"/></linearGradient></defs><rect x="870.5" y="557.06" width="38" height="55.94" fill="url(#g19)" stroke="#90dcb4" stroke-width="1"/><defs><linearGradient id="g20" gradientUnits="userSpaceOnUse" x1="0" y1="486" x2="0" y2="613"><stop offset="0" stop-color="#abdec2"/><stop offset="1" stop-color="#267a52"/></linearGradient></defs><rect x="947.5" y="571.17" width="38" height="41.83" fill="url(#g20)" stroke="#90dcb4" stroke-width="1"/><defs><linearGradient id="g21" gradientUnits="userSpaceOnUse" x1="0" y1="486" x2="0" y2="613"><stop offset="0" stop-color="#abdec2"/><stop offset="1" stop-color="#267a52"/></linearGradient></defs><rect x="1024.5" y="486.50" width="38" height="126.50" fill="url(#g21)" stroke="#90dcb4" stroke-width="1"/><defs><linearGradient id="g22" gradientUnits="userSpaceOnUse" x1="0" y1="486" x2="0" y2="613"><stop offset="0" stop-color="#abdec2"/><stop offset="1" stop-color="#267a52"/></linearGradient></defs><rect x="1101.5" y="528.83" width="38" height="84.17" fill="url(#g22)" stroke="#90dcb4" stroke-width="1"/><text x="1333" y="481" font-size="12" fill="#1a1a1a" text-anchor="start" >Entries by months</text><rect x="1329" y="613.00" width="558" height="1" fill="#a0a0a0" shape-rendering="geometricPrecision"/><rect x="1329" y="594.86" width="558" height="1" fill="#c8c8c8" shape-rendering="geometricPrecision"/><rect x="1329" y="576.71" width="558" height="1" fill="#c8c8c8" shape-rendering="geometricPrecision"/><rect x="1329" y="558.57" width="558" height="1" fill="#c8c8c8" shape-rendering="geometricPrecision"/><rect x="1329" y="540.43" width="558" height="1" fill="#c8c8c8" shape-rendering="geometricPrecision"/><rect x="1329" y="522.29" width="558" height="1" fill="#c8c8c8" shape-rendering="geometricPrecision"/><rect x="1329" y="504.14" width="558" height="1" fill="#c8c8c8" shape-rendering="geometricPrecision"/><rect x="1329" y="486.00" width="558" height="1" fill="#a0a0a0" shape-rendering="geometricPrecision"/><text x="1324" y="616.6" font-size="9.8" fill="#2a2a2a" text-anchor="end" >0</text><text x="1324" y="598.6" font-size="9.8" fill="#2a2a2a" text-anchor="end" >1</text><text x="1324" y="580.6" font-size="9.8" fill="#2a2a2a" text-anchor="end" >2</text><text x="1324" y="562.6" font-size="9.8" fill="#2a2a2a" text-anchor="end" >3</text><text x="1324" y="543.6" font-size="9.8" fill="#2a2a2a" text-anchor="end" >4</text><text x="1324" y="525.6" font-size="9.8" fill="#2a2a2a" text-anchor="end" >5</text><text x="1324" y="507.6" font-size="9.8" fill="#2a2a2a" text-anchor="end" >6</text><text x="1324" y="489.6" font-size="9.8" fill="#2a2a2a" text-anchor="end" >7</text><rect x="1334" y="486" width="1" height="132" fill="#a0a0a0"/><rect x="1334" y="613" width="1" height="6" fill="#a0a0a0"/><text x="1346.5" y="628" font-size="9.8" fill="#2a2a2a" text-anchor="start" >Jan</text><rect x="1380" y="613" width="1" height="6" fill="#a0a0a0"/><text x="1392.5" y="628" font-size="9.8" fill="#2a2a2a" text-anchor="start" >Feb</text><rect x="1426" y="613" width="1" height="6" fill="#a0a0a0"/><text x="1438.5" y="628" font-size="9.8" fill="#2a2a2a" text-anchor="start" >Mar</text><rect x="1472" y="613" width="1" height="6" fill="#a0a0a0"/><text x="1484.5" y="628" font-size="9.8" fill="#2a2a2a" text-anchor="start" >Apr</text><rect x="1518" y="613" width="1" height="6" fill="#a0a0a0"/><text x="1530.5" y="628" font-size="9.8" fill="#2a2a2a" text-anchor="start" >May</text><rect x="1564" y="613" width="1" height="6" fill="#a0a0a0"/><text x="1576.5" y="628" font-size="9.8" fill="#2a2a2a" text-anchor="start" >Jun</text><rect x="1610" y="613" width="1" height="6" fill="#a0a0a0"/><text x="1622.5" y="628" font-size="9.8" fill="#2a2a2a" text-anchor="start" >Jul</text><rect x="1656" y="613" width="1" height="6" fill="#a0a0a0"/><text x="1668.5" y="628" font-size="9.8" fill="#2a2a2a" text-anchor="start" >Aug</text><rect x="1702" y="613" width="1" height="6" fill="#a0a0a0"/><text x="1714.5" y="628" font-size="9.8" fill="#2a2a2a" text-anchor="start" >Sep</text><rect x="1748" y="613" width="1" height="6" fill="#a0a0a0"/><text x="1760.5" y="628" font-size="9.8" fill="#2a2a2a" text-anchor="start" >Oct</text><rect x="1794" y="613" width="1" height="6" fill="#a0a0a0"/><text x="1806.5" y="628" font-size="9.8" fill="#2a2a2a" text-anchor="start" >Nov</text><rect x="1840" y="613" width="1" height="6" fill="#a0a0a0"/><text x="1852.5" y="628" font-size="9.8" fill="#2a2a2a" text-anchor="start" >Dec</text><defs><linearGradient id="g23" gradientUnits="userSpaceOnUse" x1="0" y1="486" x2="0" y2="613"><stop offset="0" stop-color="#90d2e2"/><stop offset="1" stop-color="#03607e"/></linearGradient></defs><rect x="1345.5" y="559.07" width="23" height="53.93" fill="url(#g23)" stroke="#58c0dc" stroke-width="1"/><defs><linearGradient id="g24" gradientUnits="userSpaceOnUse" x1="0" y1="486" x2="0" y2="613"><stop offset="0" stop-color="#90d2e2"/><stop offset="1" stop-color="#03607e"/></linearGradient></defs><rect x="1391.5" y="559.07" width="23" height="53.93" fill="url(#g24)" stroke="#58c0dc" stroke-width="1"/><defs><linearGradient id="g25" gradientUnits="userSpaceOnUse" x1="0" y1="486" x2="0" y2="613"><stop offset="0" stop-color="#90d2e2"/><stop offset="1" stop-color="#03607e"/></linearGradient></defs><rect x="1437.5" y="577.21" width="23" height="35.79" fill="url(#g25)" stroke="#58c0dc" stroke-width="1"/><defs><linearGradient id="g26" gradientUnits="userSpaceOnUse" x1="0" y1="486" x2="0" y2="613"><stop offset="0" stop-color="#90d2e2"/><stop offset="1" stop-color="#03607e"/></linearGradient></defs><rect x="1483.5" y="595.36" width="23" height="17.64" fill="url(#g26)" stroke="#58c0dc" stroke-width="1"/><defs><linearGradient id="g27" gradientUnits="userSpaceOnUse" x1="0" y1="486" x2="0" y2="613"><stop offset="0" stop-color="#90d2e2"/><stop offset="1" stop-color="#03607e"/></linearGradient></defs><rect x="1529.5" y="577.21" width="23" height="35.79" fill="url(#g27)" stroke="#58c0dc" stroke-width="1"/><defs><linearGradient id="g28" gradientUnits="userSpaceOnUse" x1="0" y1="486" x2="0" y2="613"><stop offset="0" stop-color="#90d2e2"/><stop offset="1" stop-color="#03607e"/></linearGradient></defs><rect x="1621.5" y="522.79" width="23" height="90.21" fill="url(#g28)" stroke="#58c0dc" stroke-width="1"/><defs><linearGradient id="g29" gradientUnits="userSpaceOnUse" x1="0" y1="486" x2="0" y2="613"><stop offset="0" stop-color="#90d2e2"/><stop offset="1" stop-color="#03607e"/></linearGradient></defs><rect x="1667.5" y="577.21" width="23" height="35.79" fill="url(#g29)" stroke="#58c0dc" stroke-width="1"/><defs><linearGradient id="g30" gradientUnits="userSpaceOnUse" x1="0" y1="486" x2="0" y2="613"><stop offset="0" stop-color="#90d2e2"/><stop offset="1" stop-color="#03607e"/></linearGradient></defs><rect x="1713.5" y="559.07" width="23" height="53.93" fill="url(#g30)" stroke="#58c0dc" stroke-width="1"/><defs><linearGradient id="g31" gradientUnits="userSpaceOnUse" x1="0" y1="486" x2="0" y2="613"><stop offset="0" stop-color="#90d2e2"/><stop offset="1" stop-color="#03607e"/></linearGradient></defs><rect x="1759.5" y="486.50" width="23" height="126.50" fill="url(#g31)" stroke="#58c0dc" stroke-width="1"/><defs><linearGradient id="g32" gradientUnits="userSpaceOnUse" x1="0" y1="486" x2="0" y2="613"><stop offset="0" stop-color="#90d2e2"/><stop offset="1" stop-color="#03607e"/></linearGradient></defs><rect x="1805.5" y="559.07" width="23" height="53.93" fill="url(#g32)" stroke="#58c0dc" stroke-width="1"/><text x="59" y="652" font-size="12" fill="#1a1a1a" text-anchor="start" >Profits and losses by hours</text><rect x="55" y="784.00" width="558" height="1" fill="#a0a0a0" shape-rendering="geometricPrecision"/><rect x="55" y="768.12" width="558" height="1" fill="#c8c8c8" shape-rendering="geometricPrecision"/><rect x="55" y="752.25" width="558" height="1" fill="#c8c8c8" shape-rendering="geometricPrecision"/><rect x="55" y="736.38" width="558" height="1" fill="#c8c8c8" shape-rendering="geometricPrecision"/><rect x="55" y="720.50" width="558" height="1" fill="#c8c8c8" shape-rendering="geometricPrecision"/><rect x="55" y="704.62" width="558" height="1" fill="#c8c8c8" shape-rendering="geometricPrecision"/><rect x="55" y="688.75" width="558" height="1" fill="#c8c8c8" shape-rendering="geometricPrecision"/><rect x="55" y="672.88" width="558" height="1" fill="#c8c8c8" shape-rendering="geometricPrecision"/><rect x="55" y="657.00" width="558" height="1" fill="#a0a0a0" shape-rendering="geometricPrecision"/><text x="50" y="787.6" font-size="9.8" fill="#2a2a2a" text-anchor="end" >0</text><text x="50" y="771.6" font-size="9.8" fill="#2a2a2a" text-anchor="end" >12</text><text x="50" y="755.6" font-size="9.8" fill="#2a2a2a" text-anchor="end" >25</text><text x="50" y="739.6" font-size="9.8" fill="#2a2a2a" text-anchor="end" >37</text><text x="50" y="723.6" font-size="9.8" fill="#2a2a2a" text-anchor="end" >50</text><text x="50" y="708.6" font-size="9.8" fill="#2a2a2a" text-anchor="end" >62</text><text x="50" y="692.6" font-size="9.8" fill="#2a2a2a" text-anchor="end" >75</text><text x="50" y="676.6" font-size="9.8" fill="#2a2a2a" text-anchor="end" >87</text><text x="50" y="660.6" font-size="9.8" fill="#2a2a2a" text-anchor="end" >100</text><rect x="60" y="657" width="1" height="132" fill="#a0a0a0"/><rect x="60" y="784" width="1" height="6" fill="#a0a0a0"/><text x="61.5" y="799" font-size="9.8" fill="#2a2a2a" text-anchor="start" >0</text><rect x="83" y="784" width="1" height="6" fill="#a0a0a0"/><text x="84.5" y="799" font-size="9.8" fill="#2a2a2a" text-anchor="start" >1</text><rect x="106" y="784" width="1" height="6" fill="#a0a0a0"/><text x="107.5" y="799" font-size="9.8" fill="#2a2a2a" text-anchor="start" >2</text><rect x="129" y="784" width="1" height="6" fill="#a0a0a0"/><text x="130.5" y="799" font-size="9.8" fill="#2a2a2a" text-anchor="start" >3</text><rect x="152" y="784" width="1" height="6" fill="#a0a0a0"/><text x="153.5" y="799" font-size="9.8" fill="#2a2a2a" text-anchor="start" >4</text><rect x="175" y="784" width="1" height="6" fill="#a0a0a0"/><text x="176.5" y="799" font-size="9.8" fill="#2a2a2a" text-anchor="start" >5</text><rect x="198" y="784" width="1" height="6" fill="#a0a0a0"/><text x="199.5" y="799" font-size="9.8" fill="#2a2a2a" text-anchor="start" >6</text><rect x="221" y="784" width="1" height="6" fill="#a0a0a0"/><text x="222.5" y="799" font-size="9.8" fill="#2a2a2a" text-anchor="start" >7</text><rect x="244" y="784" width="1" height="6" fill="#a0a0a0"/><text x="245.5" y="799" font-size="9.8" fill="#2a2a2a" text-anchor="start" >8</text><rect x="267" y="784" width="1" height="6" fill="#a0a0a0"/><text x="268.5" y="799" font-size="9.8" fill="#2a2a2a" text-anchor="start" >9</text><rect x="290" y="784" width="1" height="6" fill="#a0a0a0"/><text x="291.5" y="799" font-size="9.8" fill="#2a2a2a" text-anchor="start" >10</text><rect x="313" y="784" width="1" height="6" fill="#a0a0a0"/><text x="314.5" y="799" font-size="9.8" fill="#2a2a2a" text-anchor="start" >11</text><rect x="336" y="784" width="1" height="6" fill="#a0a0a0"/><text x="337.5" y="799" font-size="9.8" fill="#2a2a2a" text-anchor="start" >12</text><rect x="359" y="784" width="1" height="6" fill="#a0a0a0"/><text x="360.5" y="799" font-size="9.8" fill="#2a2a2a" text-anchor="start" >13</text><rect x="382" y="784" width="1" height="6" fill="#a0a0a0"/><text x="383.5" y="799" font-size="9.8" fill="#2a2a2a" text-anchor="start" >14</text><rect x="405" y="784" width="1" height="6" fill="#a0a0a0"/><text x="406.5" y="799" font-size="9.8" fill="#2a2a2a" text-anchor="start" >15</text><rect x="428" y="784" width="1" height="6" fill="#a0a0a0"/><text x="429.5" y="799" font-size="9.8" fill="#2a2a2a" text-anchor="start" >16</text><rect x="451" y="784" width="1" height="6" fill="#a0a0a0"/><text x="452.5" y="799" font-size="9.8" fill="#2a2a2a" text-anchor="start" >17</text><rect x="474" y="784" width="1" height="6" fill="#a0a0a0"/><text x="475.5" y="799" font-size="9.8" fill="#2a2a2a" text-anchor="start" >18</text><rect x="497" y="784" width="1" height="6" fill="#a0a0a0"/><text x="498.5" y="799" font-size="9.8" fill="#2a2a2a" text-anchor="start" >19</text><rect x="520" y="784" width="1" height="6" fill="#a0a0a0"/><text x="521.5" y="799" font-size="9.8" fill="#2a2a2a" text-anchor="start" >20</text><rect x="543" y="784" width="1" height="6" fill="#a0a0a0"/><text x="544.5" y="799" font-size="9.8" fill="#2a2a2a" text-anchor="start" >21</text><rect x="566" y="784" width="1" height="6" fill="#a0a0a0"/><text x="567.5" y="799" font-size="9.8" fill="#2a2a2a" text-anchor="start" >22</text><rect x="589" y="784" width="1" height="6" fill="#a0a0a0"/><text x="590.5" y="799" font-size="9.8" fill="#2a2a2a" text-anchor="start" >23</text><defs><linearGradient id="g33" gradientUnits="userSpaceOnUse" x1="0" y1="657" x2="0" y2="784"><stop offset="0" stop-color="#9db0dc"/><stop offset="1" stop-color="#213f88"/></linearGradient></defs><rect x="85.5" y="765.45" width="8" height="18.55" fill="url(#g33)" stroke="#7f9ae0" stroke-width="1"/><defs><linearGradient id="g34" gradientUnits="userSpaceOnUse" x1="0" y1="657" x2="0" y2="784"><stop offset="0" stop-color="#9db0dc"/><stop offset="1" stop-color="#213f88"/></linearGradient></defs><rect x="108.5" y="759.10" width="8" height="24.90" fill="url(#g34)" stroke="#7f9ae0" stroke-width="1"/><defs><linearGradient id="g35" gradientUnits="userSpaceOnUse" x1="0" y1="657" x2="0" y2="784"><stop offset="0" stop-color="#9db0dc"/><stop offset="1" stop-color="#213f88"/></linearGradient></defs><rect x="131.5" y="771.80" width="8" height="12.20" fill="url(#g35)" stroke="#7f9ae0" stroke-width="1"/><defs><linearGradient id="g36" gradientUnits="userSpaceOnUse" x1="0" y1="657" x2="0" y2="784"><stop offset="0" stop-color="#9db0dc"/><stop offset="1" stop-color="#213f88"/></linearGradient></defs><rect x="154.5" y="746.40" width="8" height="37.60" fill="url(#g36)" stroke="#7f9ae0" stroke-width="1"/><defs><linearGradient id="g37" gradientUnits="userSpaceOnUse" x1="0" y1="657" x2="0" y2="784"><stop offset="0" stop-color="#9db0dc"/><stop offset="1" stop-color="#213f88"/></linearGradient></defs><rect x="177.5" y="771.80" width="8" height="12.20" fill="url(#g37)" stroke="#7f9ae0" stroke-width="1"/><defs><linearGradient id="g38" gradientUnits="userSpaceOnUse" x1="0" y1="657" x2="0" y2="784"><stop offset="0" stop-color="#9db0dc"/><stop offset="1" stop-color="#213f88"/></linearGradient></defs><rect x="200.5" y="771.80" width="8" height="12.20" fill="url(#g38)" stroke="#7f9ae0" stroke-width="1"/><defs><linearGradient id="g39" gradientUnits="userSpaceOnUse" x1="0" y1="657" x2="0" y2="784"><stop offset="0" stop-color="#9db0dc"/><stop offset="1" stop-color="#213f88"/></linearGradient></defs><rect x="269.5" y="771.80" width="8" height="12.20" fill="url(#g39)" stroke="#7f9ae0" stroke-width="1"/><defs><linearGradient id="g40" gradientUnits="userSpaceOnUse" x1="0" y1="657" x2="0" y2="784"><stop offset="0" stop-color="#9db0dc"/><stop offset="1" stop-color="#213f88"/></linearGradient></defs><rect x="292.5" y="771.80" width="8" height="12.20" fill="url(#g40)" stroke="#7f9ae0" stroke-width="1"/><defs><linearGradient id="g41" gradientUnits="userSpaceOnUse" x1="0" y1="657" x2="0" y2="784"><stop offset="0" stop-color="#9db0dc"/><stop offset="1" stop-color="#213f88"/></linearGradient></defs><rect x="315.5" y="759.10" width="8" height="24.90" fill="url(#g41)" stroke="#7f9ae0" stroke-width="1"/><defs><linearGradient id="g42" gradientUnits="userSpaceOnUse" x1="0" y1="657" x2="0" y2="784"><stop offset="0" stop-color="#9db0dc"/><stop offset="1" stop-color="#213f88"/></linearGradient></defs><rect x="338.5" y="758.72" width="8" height="25.28" fill="url(#g42)" stroke="#7f9ae0" stroke-width="1"/><defs><linearGradient id="g43" gradientUnits="userSpaceOnUse" x1="0" y1="657" x2="0" y2="784"><stop offset="0" stop-color="#9db0dc"/><stop offset="1" stop-color="#213f88"/></linearGradient></defs><rect x="361.5" y="759.48" width="8" height="24.52" fill="url(#g43)" stroke="#7f9ae0" stroke-width="1"/><defs><linearGradient id="g44" gradientUnits="userSpaceOnUse" x1="0" y1="657" x2="0" y2="784"><stop offset="0" stop-color="#9db0dc"/><stop offset="1" stop-color="#213f88"/></linearGradient></defs><rect x="384.5" y="744.62" width="8" height="39.38" fill="url(#g44)" stroke="#7f9ae0" stroke-width="1"/><defs><linearGradient id="g45" gradientUnits="userSpaceOnUse" x1="0" y1="657" x2="0" y2="784"><stop offset="0" stop-color="#9db0dc"/><stop offset="1" stop-color="#213f88"/></linearGradient></defs><rect x="407.5" y="743.86" width="8" height="40.14" fill="url(#g45)" stroke="#7f9ae0" stroke-width="1"/><defs><linearGradient id="g46" gradientUnits="userSpaceOnUse" x1="0" y1="657" x2="0" y2="784"><stop offset="0" stop-color="#9db0dc"/><stop offset="1" stop-color="#213f88"/></linearGradient></defs><rect x="430.5" y="733.70" width="8" height="50.30" fill="url(#g46)" stroke="#7f9ae0" stroke-width="1"/><defs><linearGradient id="g47" gradientUnits="userSpaceOnUse" x1="0" y1="657" x2="0" y2="784"><stop offset="0" stop-color="#9db0dc"/><stop offset="1" stop-color="#213f88"/></linearGradient></defs><rect x="453.5" y="772.05" width="8" height="11.95" fill="url(#g47)" stroke="#7f9ae0" stroke-width="1"/><defs><linearGradient id="g48" gradientUnits="userSpaceOnUse" x1="0" y1="657" x2="0" y2="784"><stop offset="0" stop-color="#9db0dc"/><stop offset="1" stop-color="#213f88"/></linearGradient></defs><rect x="476.5" y="759.35" width="8" height="24.65" fill="url(#g48)" stroke="#7f9ae0" stroke-width="1"/><defs><linearGradient id="g49" gradientUnits="userSpaceOnUse" x1="0" y1="657" x2="0" y2="784"><stop offset="0" stop-color="#9db0dc"/><stop offset="1" stop-color="#213f88"/></linearGradient></defs><rect x="522.5" y="771.80" width="8" height="12.20" fill="url(#g49)" stroke="#7f9ae0" stroke-width="1"/><text x="696" y="652" font-size="12" fill="#1a1a1a" text-anchor="start" >Profits and losses by weekdays</text><rect x="692" y="784.00" width="545" height="1" fill="#a0a0a0" shape-rendering="geometricPrecision"/><rect x="692" y="768.12" width="545" height="1" fill="#c8c8c8" shape-rendering="geometricPrecision"/><rect x="692" y="752.25" width="545" height="1" fill="#c8c8c8" shape-rendering="geometricPrecision"/><rect x="692" y="736.38" width="545" height="1" fill="#c8c8c8" shape-rendering="geometricPrecision"/><rect x="692" y="720.50" width="545" height="1" fill="#c8c8c8" shape-rendering="geometricPrecision"/><rect x="692" y="704.62" width="545" height="1" fill="#c8c8c8" shape-rendering="geometricPrecision"/><rect x="692" y="688.75" width="545" height="1" fill="#c8c8c8" shape-rendering="geometricPrecision"/><rect x="692" y="672.88" width="545" height="1" fill="#c8c8c8" shape-rendering="geometricPrecision"/><rect x="692" y="657.00" width="545" height="1" fill="#a0a0a0" shape-rendering="geometricPrecision"/><text x="687" y="787.6" font-size="9.8" fill="#2a2a2a" text-anchor="end" >0</text><text x="687" y="771.6" font-size="9.8" fill="#2a2a2a" text-anchor="end" >12</text><text x="687" y="755.6" font-size="9.8" fill="#2a2a2a" text-anchor="end" >25</text><text x="687" y="739.6" font-size="9.8" fill="#2a2a2a" text-anchor="end" >37</text><text x="687" y="723.6" font-size="9.8" fill="#2a2a2a" text-anchor="end" >50</text><text x="687" y="708.6" font-size="9.8" fill="#2a2a2a" text-anchor="end" >62</text><text x="687" y="692.6" font-size="9.8" fill="#2a2a2a" text-anchor="end" >75</text><text x="687" y="676.6" font-size="9.8" fill="#2a2a2a" text-anchor="end" >87</text><text x="687" y="660.6" font-size="9.8" fill="#2a2a2a" text-anchor="end" >100</text><rect x="697" y="657" width="1" height="132" fill="#a0a0a0"/><rect x="697" y="784" width="1" height="6" fill="#a0a0a0"/><text x="718" y="799" font-size="9.8" fill="#2a2a2a" text-anchor="start" >Sun</text><rect x="774" y="784" width="1" height="6" fill="#a0a0a0"/><text x="795" y="799" font-size="9.8" fill="#2a2a2a" text-anchor="start" >Mon</text><rect x="851" y="784" width="1" height="6" fill="#a0a0a0"/><text x="872" y="799" font-size="9.8" fill="#2a2a2a" text-anchor="start" >Tue</text><rect x="928" y="784" width="1" height="6" fill="#a0a0a0"/><text x="949" y="799" font-size="9.8" fill="#2a2a2a" text-anchor="start" >Wed</text><rect x="1005" y="784" width="1" height="6" fill="#a0a0a0"/><text x="1026" y="799" font-size="9.8" fill="#2a2a2a" text-anchor="start" >Thu</text><rect x="1082" y="784" width="1" height="6" fill="#a0a0a0"/><text x="1103" y="799" font-size="9.8" fill="#2a2a2a" text-anchor="start" >Fri</text><rect x="1159" y="784" width="1" height="6" fill="#a0a0a0"/><text x="1180" y="799" font-size="9.8" fill="#2a2a2a" text-anchor="start" >Sat</text><defs><linearGradient id="g50" gradientUnits="userSpaceOnUse" x1="0" y1="657" x2="0" y2="784"><stop offset="0" stop-color="#9db0dc"/><stop offset="1" stop-color="#213f88"/></linearGradient></defs><rect x="793.5" y="673.50" width="19" height="110.50" fill="url(#g50)" stroke="#7f9ae0" stroke-width="1"/><defs><linearGradient id="g51" gradientUnits="userSpaceOnUse" x1="0" y1="657" x2="0" y2="784"><stop offset="0" stop-color="#9db0dc"/><stop offset="1" stop-color="#213f88"/></linearGradient></defs><rect x="870.5" y="757.07" width="19" height="26.93" fill="url(#g51)" stroke="#7f9ae0" stroke-width="1"/><defs><linearGradient id="g52" gradientUnits="userSpaceOnUse" x1="0" y1="657" x2="0" y2="784"><stop offset="0" stop-color="#9db0dc"/><stop offset="1" stop-color="#213f88"/></linearGradient></defs><rect x="947.5" y="732.94" width="19" height="51.06" fill="url(#g52)" stroke="#7f9ae0" stroke-width="1"/><defs><linearGradient id="g53" gradientUnits="userSpaceOnUse" x1="0" y1="657" x2="0" y2="784"><stop offset="0" stop-color="#9db0dc"/><stop offset="1" stop-color="#213f88"/></linearGradient></defs><rect x="1024.5" y="669.06" width="19" height="114.94" fill="url(#g53)" stroke="#7f9ae0" stroke-width="1"/><defs><linearGradient id="g54" gradientUnits="userSpaceOnUse" x1="0" y1="657" x2="0" y2="784"><stop offset="0" stop-color="#9db0dc"/><stop offset="1" stop-color="#213f88"/></linearGradient></defs><rect x="1101.5" y="681.12" width="19" height="102.88" fill="url(#g54)" stroke="#7f9ae0" stroke-width="1"/><text x="1333" y="652" font-size="12" fill="#1a1a1a" text-anchor="start" >Profits and losses by months</text><rect x="1329" y="784.00" width="558" height="1" fill="#a0a0a0" shape-rendering="geometricPrecision"/><rect x="1329" y="768.12" width="558" height="1" fill="#c8c8c8" shape-rendering="geometricPrecision"/><rect x="1329" y="752.25" width="558" height="1" fill="#c8c8c8" shape-rendering="geometricPrecision"/><rect x="1329" y="736.38" width="558" height="1" fill="#c8c8c8" shape-rendering="geometricPrecision"/><rect x="1329" y="720.50" width="558" height="1" fill="#c8c8c8" shape-rendering="geometricPrecision"/><rect x="1329" y="704.62" width="558" height="1" fill="#c8c8c8" shape-rendering="geometricPrecision"/><rect x="1329" y="688.75" width="558" height="1" fill="#c8c8c8" shape-rendering="geometricPrecision"/><rect x="1329" y="672.88" width="558" height="1" fill="#c8c8c8" shape-rendering="geometricPrecision"/><rect x="1329" y="657.00" width="558" height="1" fill="#a0a0a0" shape-rendering="geometricPrecision"/><text x="1324" y="787.6" font-size="9.8" fill="#2a2a2a" text-anchor="end" >0</text><text x="1324" y="771.6" font-size="9.8" fill="#2a2a2a" text-anchor="end" >12</text><text x="1324" y="755.6" font-size="9.8" fill="#2a2a2a" text-anchor="end" >25</text><text x="1324" y="739.6" font-size="9.8" fill="#2a2a2a" text-anchor="end" >37</text><text x="1324" y="723.6" font-size="9.8" fill="#2a2a2a" text-anchor="end" >50</text><text x="1324" y="708.6" font-size="9.8" fill="#2a2a2a" text-anchor="end" >62</text><text x="1324" y="692.6" font-size="9.8" fill="#2a2a2a" text-anchor="end" >75</text><text x="1324" y="676.6" font-size="9.8" fill="#2a2a2a" text-anchor="end" >87</text><text x="1324" y="660.6" font-size="9.8" fill="#2a2a2a" text-anchor="end" >100</text><rect x="1334" y="657" width="1" height="132" fill="#a0a0a0"/><rect x="1334" y="784" width="1" height="6" fill="#a0a0a0"/><text x="1346.5" y="799" font-size="9.8" fill="#2a2a2a" text-anchor="start" >Jan</text><rect x="1380" y="784" width="1" height="6" fill="#a0a0a0"/><text x="1392.5" y="799" font-size="9.8" fill="#2a2a2a" text-anchor="start" >Feb</text><rect x="1426" y="784" width="1" height="6" fill="#a0a0a0"/><text x="1438.5" y="799" font-size="9.8" fill="#2a2a2a" text-anchor="start" >Mar</text><rect x="1472" y="784" width="1" height="6" fill="#a0a0a0"/><text x="1484.5" y="799" font-size="9.8" fill="#2a2a2a" text-anchor="start" >Apr</text><rect x="1518" y="784" width="1" height="6" fill="#a0a0a0"/><text x="1530.5" y="799" font-size="9.8" fill="#2a2a2a" text-anchor="start" >May</text><rect x="1564" y="784" width="1" height="6" fill="#a0a0a0"/><text x="1576.5" y="799" font-size="9.8" fill="#2a2a2a" text-anchor="start" >Jun</text><rect x="1610" y="784" width="1" height="6" fill="#a0a0a0"/><text x="1622.5" y="799" font-size="9.8" fill="#2a2a2a" text-anchor="start" >Jul</text><rect x="1656" y="784" width="1" height="6" fill="#a0a0a0"/><text x="1668.5" y="799" font-size="9.8" fill="#2a2a2a" text-anchor="start" >Aug</text><rect x="1702" y="784" width="1" height="6" fill="#a0a0a0"/><text x="1714.5" y="799" font-size="9.8" fill="#2a2a2a" text-anchor="start" >Sep</text><rect x="1748" y="784" width="1" height="6" fill="#a0a0a0"/><text x="1760.5" y="799" font-size="9.8" fill="#2a2a2a" text-anchor="start" >Oct</text><rect x="1794" y="784" width="1" height="6" fill="#a0a0a0"/><text x="1806.5" y="799" font-size="9.8" fill="#2a2a2a" text-anchor="start" >Nov</text><rect x="1840" y="784" width="1" height="6" fill="#a0a0a0"/><text x="1852.5" y="799" font-size="9.8" fill="#2a2a2a" text-anchor="start" >Dec</text><defs><linearGradient id="g55" gradientUnits="userSpaceOnUse" x1="0" y1="657" x2="0" y2="784"><stop offset="0" stop-color="#9db0dc"/><stop offset="1" stop-color="#213f88"/></linearGradient></defs><rect x="1345.5" y="746.40" width="11" height="37.60" fill="url(#g55)" stroke="#7f9ae0" stroke-width="1"/><defs><linearGradient id="g56" gradientUnits="userSpaceOnUse" x1="0" y1="657" x2="0" y2="784"><stop offset="0" stop-color="#9db0dc"/><stop offset="1" stop-color="#213f88"/></linearGradient></defs><rect x="1391.5" y="759.10" width="11" height="24.90" fill="url(#g56)" stroke="#7f9ae0" stroke-width="1"/><defs><linearGradient id="g57" gradientUnits="userSpaceOnUse" x1="0" y1="657" x2="0" y2="784"><stop offset="0" stop-color="#9db0dc"/><stop offset="1" stop-color="#213f88"/></linearGradient></defs><rect x="1437.5" y="745.89" width="11" height="38.11" fill="url(#g57)" stroke="#7f9ae0" stroke-width="1"/><defs><linearGradient id="g58" gradientUnits="userSpaceOnUse" x1="0" y1="657" x2="0" y2="784"><stop offset="0" stop-color="#9db0dc"/><stop offset="1" stop-color="#213f88"/></linearGradient></defs><rect x="1483.5" y="772.05" width="11" height="11.95" fill="url(#g58)" stroke="#7f9ae0" stroke-width="1"/><defs><linearGradient id="g59" gradientUnits="userSpaceOnUse" x1="0" y1="657" x2="0" y2="784"><stop offset="0" stop-color="#9db0dc"/><stop offset="1" stop-color="#213f88"/></linearGradient></defs><rect x="1529.5" y="759.10" width="11" height="24.90" fill="url(#g59)" stroke="#7f9ae0" stroke-width="1"/><defs><linearGradient id="g60" gradientUnits="userSpaceOnUse" x1="0" y1="657" x2="0" y2="784"><stop offset="0" stop-color="#9db0dc"/><stop offset="1" stop-color="#213f88"/></linearGradient></defs><rect x="1621.5" y="732.43" width="11" height="51.57" fill="url(#g60)" stroke="#7f9ae0" stroke-width="1"/><defs><linearGradient id="g61" gradientUnits="userSpaceOnUse" x1="0" y1="657" x2="0" y2="784"><stop offset="0" stop-color="#9db0dc"/><stop offset="1" stop-color="#213f88"/></linearGradient></defs><rect x="1667.5" y="746.40" width="11" height="37.60" fill="url(#g61)" stroke="#7f9ae0" stroke-width="1"/><defs><linearGradient id="g62" gradientUnits="userSpaceOnUse" x1="0" y1="657" x2="0" y2="784"><stop offset="0" stop-color="#9db0dc"/><stop offset="1" stop-color="#213f88"/></linearGradient></defs><rect x="1713.5" y="746.40" width="11" height="37.60" fill="url(#g62)" stroke="#7f9ae0" stroke-width="1"/><defs><linearGradient id="g63" gradientUnits="userSpaceOnUse" x1="0" y1="657" x2="0" y2="784"><stop offset="0" stop-color="#9db0dc"/><stop offset="1" stop-color="#213f88"/></linearGradient></defs><rect x="1759.5" y="686.20" width="11" height="97.80" fill="url(#g63)" stroke="#7f9ae0" stroke-width="1"/><defs><linearGradient id="g64" gradientUnits="userSpaceOnUse" x1="0" y1="657" x2="0" y2="784"><stop offset="0" stop-color="#9db0dc"/><stop offset="1" stop-color="#213f88"/></linearGradient></defs><rect x="1805.5" y="744.62" width="11" height="39.38" fill="url(#g64)" stroke="#7f9ae0" stroke-width="1"/><svg x="0" y="0" width="1920" height="1033" overflow="hidden"><rect x="55" y="858.00" width="1834" height="1" fill="#a0a0a0"/><rect x="55" y="858.00" width="5" height="1" fill="#a0a0a0"/><text x="50" y="861.6" font-size="9.8" fill="#2a2a2a" text-anchor="end" >20</text><rect x="55" y="876.30" width="1834" height="1" fill="#dcdcdc"/><rect x="55" y="876.30" width="5" height="1" fill="#a0a0a0"/><text x="50" y="880.6" font-size="9.8" fill="#2a2a2a" text-anchor="end" >18</text><rect x="55" y="894.60" width="1834" height="1" fill="#dcdcdc"/><rect x="55" y="894.60" width="5" height="1" fill="#a0a0a0"/><text x="50" y="898.6" font-size="9.8" fill="#2a2a2a" text-anchor="end" >16</text><rect x="55" y="912.90" width="1834" height="1" fill="#dcdcdc"/><rect x="55" y="912.90" width="5" height="1" fill="#a0a0a0"/><text x="50" y="916.6" font-size="9.8" fill="#2a2a2a" text-anchor="end" >14</text><rect x="55" y="931.20" width="1834" height="1" fill="#dcdcdc"/><rect x="55" y="931.20" width="5" height="1" fill="#a0a0a0"/><text x="50" y="935.6" font-size="9.8" fill="#2a2a2a" text-anchor="end" >12</text><rect x="55" y="949.50" width="1834" height="1" fill="#dcdcdc"/><rect x="55" y="949.50" width="5" height="1" fill="#a0a0a0"/><text x="50" y="953.6" font-size="9.8" fill="#2a2a2a" text-anchor="end" >10</text><rect x="55" y="967.80" width="1834" height="1" fill="#dcdcdc"/><rect x="55" y="967.80" width="5" height="1" fill="#a0a0a0"/><text x="50" y="971.6" font-size="9.8" fill="#2a2a2a" text-anchor="end" >8</text><rect x="55" y="986.10" width="1834" height="1" fill="#dcdcdc"/><rect x="55" y="986.10" width="5" height="1" fill="#a0a0a0"/><text x="50" y="990.6" font-size="9.8" fill="#2a2a2a" text-anchor="end" >6</text><rect x="55" y="1004.40" width="1834" height="1" fill="#dcdcdc"/><rect x="55" y="1004.40" width="5" height="1" fill="#a0a0a0"/><text x="50" y="1008.6" font-size="9.8" fill="#2a2a2a" text-anchor="end" >4</text><rect x="55" y="1022.70" width="1834" height="1" fill="#dcdcdc"/><rect x="55" y="1022.70" width="5" height="1" fill="#a0a0a0"/><text x="50" y="1026.6" font-size="9.8" fill="#2a2a2a" text-anchor="end" >2</text><rect x="60" y="858" width="1" height="175" fill="#a0a0a0"/><rect x="234" y="859" width="1" height="174" fill="#dcdcdc"/><rect x="408" y="859" width="1" height="174" fill="#dcdcdc"/><rect x="581" y="859" width="1" height="174" fill="#dcdcdc"/><rect x="755" y="859" width="1" height="174" fill="#dcdcdc"/><rect x="929" y="859" width="1" height="174" fill="#dcdcdc"/><rect x="1103" y="859" width="1" height="174" fill="#dcdcdc"/><rect x="1277" y="859" width="1" height="174" fill="#dcdcdc"/><rect x="1450" y="859" width="1" height="174" fill="#dcdcdc"/><rect x="1624" y="859" width="1" height="174" fill="#dcdcdc"/><rect x="1798" y="859" width="1" height="174" fill="#dcdcdc"/><rect x="1889" y="858" width="1" height="175" fill="#a0a0a0"/><text x="67" y="871" font-size="9" fill="#2a2a2a" text-anchor="start" >Profit</text><text x="1862" y="1037" font-size="9" fill="#2a2a2a" text-anchor="start" >MFE</text><polyline points="930.5,950.6 932,950.5 935,950.2 938,950 941,949.6 944,949.3 948,949 953.5,948.3 960.2,947.7 964.6,947.3 991.7,944.2 1063.2,936.3 1380.2,903.1" fill="none" stroke="#2f63d2" stroke-width="2"/><circle cx="930.5" cy="950.6" r="2.6" fill="#2f63d2"/><circle cx="932" cy="950.5" r="2.6" fill="#2f63d2"/><circle cx="935" cy="950.2" r="2.6" fill="#2f63d2"/><circle cx="938" cy="950" r="2.6" fill="#2f63d2"/><circle cx="941" cy="949.6" r="2.6" fill="#2f63d2"/><circle cx="944" cy="949.3" r="2.6" fill="#2f63d2"/><circle cx="948" cy="949" r="2.6" fill="#2f63d2"/><circle cx="953.5" cy="948.3" r="2.6" fill="#2f63d2"/><circle cx="960.2" cy="947.7" r="2.6" fill="#2f63d2"/><circle cx="964.6" cy="947.3" r="2.6" fill="#2f63d2"/><circle cx="991.7" cy="944.2" r="2.6" fill="#2f63d2"/><circle cx="1063.2" cy="936.3" r="2.6" fill="#2f63d2"/><circle cx="1380.2" cy="903.1" r="2.6" fill="#2f63d2"/></svg><rect x="18" y="1033" width="1902" height="24" fill="#f0f0f0" /><rect x="18" y="1033" width="189" height="1" fill="#000"/><rect x="270" y="1033" width="1650" height="1" fill="#000"/><path d="M207.5 1033 V1052.5 H270.5 V1033" fill="#fff" stroke="#000" stroke-width="1"/><text x="33" y="1047" font-size="11.5" fill="#6d6d6d" text-anchor="start" >Overview</text><text x="102" y="1047" font-size="11.5" fill="#6d6d6d" text-anchor="start" >Settings</text><text x="164" y="1047" font-size="11.5" fill="#6d6d6d" text-anchor="start" >Inputs</text><text x="217.5" y="1047" font-size="11.5" fill="#000" text-anchor="start" >Backtest</text><text x="281" y="1047" font-size="11.5" fill="#6d6d6d" text-anchor="start" >Graph</text><text x="333" y="1047" font-size="11.5" fill="#6d6d6d" text-anchor="start" >Agents</text><text x="390" y="1047" font-size="11.5" fill="#6d6d6d" text-anchor="start" >Journal</text><rect x="92" y="1037" width="1" height="14" fill="#606060"/><rect x="154" y="1037" width="1" height="14" fill="#606060"/><rect x="323" y="1037" width="1" height="14" fill="#606060"/><rect x="380" y="1037" width="1" height="14" fill="#606060"/><text x="1741" y="1049" font-size="11" fill="#000" text-anchor="start" >00:01:24 / 00:01:24</text><rect x="1845" y="1036" width="75" height="18" fill="#98c962" /><text x="1870" y="1049" font-size="12" fill="#000" text-anchor="start" >Start</text><rect x="1904" y="84" width="16" height="949" fill="#f0f0f0" /><rect x="1904" y="101" width="15" height="590" fill="#cdcdcd" /><path d="M1908.2 96.2 L1911.5 92.2 L1914.8 96.2" fill="none" stroke="#5a5a5a" stroke-width="2"/><path d="M1908.2 1022.8 L1911.5 1026.8 L1914.8 1022.8" fill="none" stroke="#5a5a5a" stroke-width="2"/>
</svg></body></html>
